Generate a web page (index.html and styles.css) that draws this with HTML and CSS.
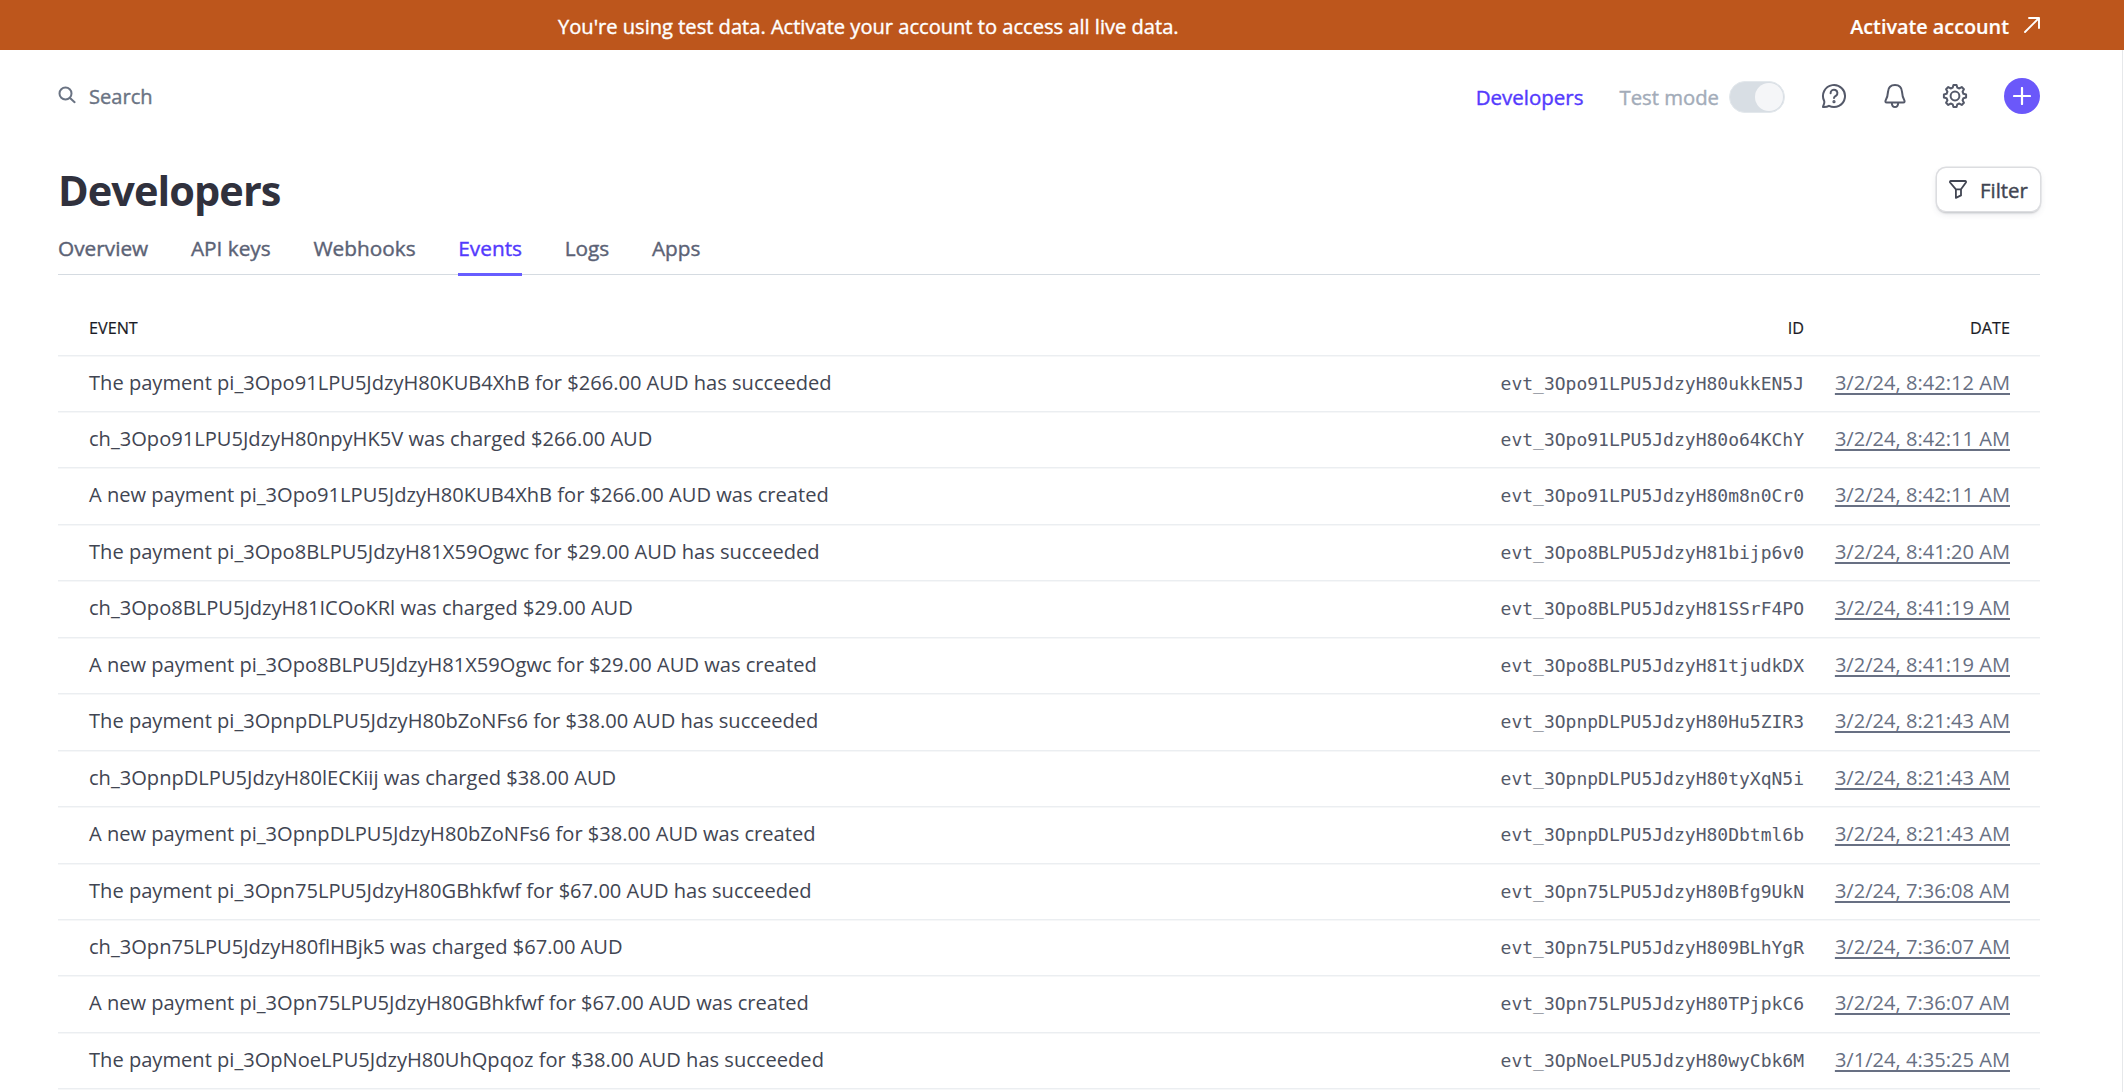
FILE: index.html
```
<!DOCTYPE html>
<html lang="en">
<head>
<meta charset="utf-8">
<title>Developers – Events</title>
<link rel="stylesheet" href="styles.css">
</head>
<body>
<div class="banner">
  <span class="banner-text">You're using test data. Activate your account to access all live data.</span>
  <a class="banner-link">Activate account
    <svg width="16" height="16" viewBox="0 0 16 16" fill="none" stroke="currentColor" stroke-width="1.9" stroke-linecap="round" stroke-linejoin="round"><path d="M1 15 15 1M5 1h10v10"/></svg>
  </a>
</div>
<div class="page">
  <header class="topbar">
    <div class="search">
      <svg width="18" height="18" viewBox="0 0 18 18" fill="none" stroke="currentColor" stroke-width="2" stroke-linecap="round"><circle cx="7.5" cy="7.5" r="6"/><path d="m12 12 4.6 4.2"/></svg>
      <span>Search</span>
    </div>
    <nav class="tools">
      <a class="nav-dev">Developers</a>
      <span class="test-label">Test mode</span>
      <span class="toggle"><span class="knob"></span></span>
      <svg class="icon help" width="26" height="26" viewBox="0 0 26 26" fill="none" stroke="currentColor" stroke-width="2" stroke-linecap="round" stroke-linejoin="round"><path d="M3.2 18A11 11 0 1 1 8 22.800C6 24 4 24.200 2 24 2.300 22 3.900 20.500 3.200 18Z"/><path d="M9.600 10.200a3.400 3.300 0 1 1 5.500 2.400c-1.300.9-2.100 1.300-2.100 2.400"/><circle cx="13" cy="18.700" r=".6" fill="currentColor"/></svg>
      <svg class="icon bell" width="24" height="26" viewBox="0 0 24 26" fill="none" stroke="currentColor" stroke-width="2" stroke-linecap="round" stroke-linejoin="round"><path d="M12 2C7.800 2 5.300 4.900 5 8.800c-.3 4.100-.7 5.700-2.200 8.300-.8 1.400-.4 2.500 1 2.500h16.400c1.400 0 1.800-1.100 1-2.500-1.500-2.600-1.900-4.200-2.200-8.300C18.700 4.900 16.200 2 12 2Z"/><path d="M8.900 20.200c0 2.300 1.300 3.800 3.100 3.800s3.100-1.500 3.100-3.800"/></svg>
      <svg class="icon gear" width="26" height="26" viewBox="-13 -13 26 26" fill="none" stroke="currentColor" stroke-width="2" stroke-linejoin="round"><circle r="4.400"/><path id="gear"/></svg>
      <span class="plus"><svg width="18" height="18" viewBox="0 0 18 18" fill="none" stroke="currentColor" stroke-width="2.200" stroke-linecap="round"><path d="M9 1v16M1 9h16"/></svg></span>
    </nav>
  </header>
  <div class="heading">
    <h1>Developers</h1>
    <button class="filter">
      <svg width="18" height="19" viewBox="0 0 18 19" fill="none" stroke="currentColor" stroke-width="1.800" stroke-linecap="round" stroke-linejoin="round"><path d="M1.800 1h14.400c.8 0 1.100.9.7 1.500L12 9.300v6.100L6.900 17.900V9.300L1.100 2.500C.7 1.900 1 1 1.800 1ZM6.900 9.400H12"/></svg>
      <span>Filter</span>
    </button>
  </div>
  <nav class="tabs">
    <a class="tab">Overview</a><a class="tab">API keys</a><a class="tab">Webhooks</a><a class="tab active">Events</a><a class="tab">Logs</a><a class="tab">Apps</a>
  </nav>
  <main class="table">
    <div class="row head"><span>EVENT</span><span>ID</span><span>DATE</span></div>
    <div class="row"><span class="event">The payment pi_3Opo91LPU5JdzyH80KUB4XhB for $266.00 AUD has succeeded</span><code class="id">evt_3Opo91LPU5JdzyH80ukkEN5J</code><a class="date">3/2/24, 8:42:12 AM</a></div>
    <div class="row"><span class="event">ch_3Opo91LPU5JdzyH80npyHK5V was charged $266.00 AUD</span><code class="id">evt_3Opo91LPU5JdzyH80o64KChY</code><a class="date">3/2/24, 8:42:11 AM</a></div>
    <div class="row"><span class="event">A new payment pi_3Opo91LPU5JdzyH80KUB4XhB for $266.00 AUD was created</span><code class="id">evt_3Opo91LPU5JdzyH80m8n0Cr0</code><a class="date">3/2/24, 8:42:11 AM</a></div>
    <div class="row"><span class="event">The payment pi_3Opo8BLPU5JdzyH81X59Ogwc for $29.00 AUD has succeeded</span><code class="id">evt_3Opo8BLPU5JdzyH81bijp6v0</code><a class="date">3/2/24, 8:41:20 AM</a></div>
    <div class="row"><span class="event">ch_3Opo8BLPU5JdzyH81ICOoKRl was charged $29.00 AUD</span><code class="id">evt_3Opo8BLPU5JdzyH81SSrF4PO</code><a class="date">3/2/24, 8:41:19 AM</a></div>
    <div class="row"><span class="event">A new payment pi_3Opo8BLPU5JdzyH81X59Ogwc for $29.00 AUD was created</span><code class="id">evt_3Opo8BLPU5JdzyH81tjudkDX</code><a class="date">3/2/24, 8:41:19 AM</a></div>
    <div class="row"><span class="event">The payment pi_3OpnpDLPU5JdzyH80bZoNFs6 for $38.00 AUD has succeeded</span><code class="id">evt_3OpnpDLPU5JdzyH80Hu5ZIR3</code><a class="date">3/2/24, 8:21:43 AM</a></div>
    <div class="row"><span class="event">ch_3OpnpDLPU5JdzyH80lECKiij was charged $38.00 AUD</span><code class="id">evt_3OpnpDLPU5JdzyH80tyXqN5i</code><a class="date">3/2/24, 8:21:43 AM</a></div>
    <div class="row"><span class="event">A new payment pi_3OpnpDLPU5JdzyH80bZoNFs6 for $38.00 AUD was created</span><code class="id">evt_3OpnpDLPU5JdzyH80Dbtml6b</code><a class="date">3/2/24, 8:21:43 AM</a></div>
    <div class="row"><span class="event">The payment pi_3Opn75LPU5JdzyH80GBhkfwf for $67.00 AUD has succeeded</span><code class="id">evt_3Opn75LPU5JdzyH80Bfg9UkN</code><a class="date">3/2/24, 7:36:08 AM</a></div>
    <div class="row"><span class="event">ch_3Opn75LPU5JdzyH80flHBjk5 was charged $67.00 AUD</span><code class="id">evt_3Opn75LPU5JdzyH809BLhYgR</code><a class="date">3/2/24, 7:36:07 AM</a></div>
    <div class="row"><span class="event">A new payment pi_3Opn75LPU5JdzyH80GBhkfwf for $67.00 AUD was created</span><code class="id">evt_3Opn75LPU5JdzyH80TPjpkC6</code><a class="date">3/2/24, 7:36:07 AM</a></div>
    <div class="row"><span class="event">The payment pi_3OpNoeLPU5JdzyH80UhQpqoz for $38.00 AUD has succeeded</span><code class="id">evt_3OpNoeLPU5JdzyH80wyCbk6M</code><a class="date">3/1/24, 4:35:25 AM</a></div>
  </main>
</div>
<script src="gear.js"></script>
</body>
</html>
```
FILE: styles.css
```
* { box-sizing: border-box; }

body {
  margin: 0;
  height: 1092px;
  overflow: hidden;
  display: flex;
  flex-direction: column;
  background: #fff;
  color: #414552;
  font: 400 20.1px "Open Sans", "Noto Sans", sans-serif;
}

svg { display: block; flex: none; }

/* A medium weight, between regular and semibold. */
.banner-text,
.search span,
.nav-dev,
.test-label,
.filter span,
.tab { -webkit-text-stroke: .4px currentColor; }

.banner {
  flex: none;
  height: 50px;
  display: flex;
  justify-content: space-between;
  align-items: center;
  padding: 2px 84px 0 558px;
  background: #bd561c;
  color: #fff;
}

.banner-link {
  display: flex;
  align-items: center;
  gap: 15px;
  font-size: 19.8px;
  font-weight: 600;
  -webkit-text-stroke: .2px currentColor;
}

.banner-link svg { margin-top: -3px; }

.page {
  flex: 1;
  width: 2123px;
  padding: 0 82px 0 58px;
  border-right: 1px solid #e6e8ea;
}

.topbar {
  height: 92px;
  display: flex;
  align-items: center;
  justify-content: space-between;
}

.search {
  display: flex;
  align-items: center;
  gap: 13px;
  color: #6a7383;
}

.search span { margin-top: 1px; }
.search svg { margin-top: -2px; }

.tools {
  display: flex;
  align-items: center;
  color: #545969;
}

.nav-dev {
  margin: 2px 36px 0 0;
  color: #533afd;
  font-size: 20.5px;
}

.test-label {
  margin: 2px 10px 0 0;
  color: #a3acb9;
  font-size: 20.3px;
}

.toggle {
  width: 56px;
  height: 32px;
  display: flex;
  justify-content: flex-end;
  margin: 2px 36px 0 0;
  padding: 1px;
  border: 1px solid #e3e8ec;
  border-radius: 16px;
  background: #d8dee4;
}

.knob {
  width: 28px;
  height: 28px;
  border-radius: 50%;
  background: #f5f6f8;
}

.help { margin-right: 36px; }
.bell { margin-right: 35px; }
.gear { margin-right: 36px; }

.plus {
  width: 36px;
  height: 36px;
  display: grid;
  place-items: center;
  border-radius: 50%;
  background: #6b58fa;
  color: #fff;
}

.heading {
  height: 95px;
  display: flex;
  align-items: center;
  justify-content: space-between;
}

h1 {
  margin: 0;
  color: #30313d;
  font-size: 41.5px;
  font-weight: 700;
  letter-spacing: -.95px;
}

.filter {
  width: 103px;
  height: 43px;
  display: flex;
  align-items: center;
  gap: 13px;
  padding: 0 12px;
  border: 0;
  border-radius: 9px;
  background: #fff;
  box-shadow: 0 0 0 1.5px #dcdde0, 0 2px 2px #b4b5b9, 0 3px 7px rgba(60, 66, 87, .12);
  color: #414552;
  font: 400 20.4px "Open Sans", sans-serif;
}

.tabs {
  height: 38px;
  display: flex;
  gap: 42.7px;
  border-bottom: 1px solid #d5dbe1;
}

.tab {
  height: 39px;
  border-bottom: 3px solid transparent;
  color: #5b6275;
  font-size: 20.8px;
  line-height: 22px;
}

.tab.active {
  border-color: #675dff;
  color: #533afd;
}

.table { margin-top: 27px; }

.row {
  height: 56.44px;
  display: grid;
  grid-template-columns: 1fr 330px 206px;
  align-items: baseline;
  padding: 0 30px 0 31px;
  border-bottom: 1px solid #ebeef1;
  box-shadow: 0 1px #f6f7f8;
  line-height: 54.6px;
}

.row > :nth-child(n + 2) { justify-self: end; }

.head {
  height: 53.6px;
  color: #1a1b25;
  font-size: 16.2px;
  line-height: 53px;
  -webkit-text-stroke: .2px currentColor;
}

.id {
  color: #545969;
  font: 18px "DejaVu Sans Mono", monospace;
}

.date {
  color: #687083;
  line-height: normal;
  text-decoration: underline;
  text-decoration-thickness: 2px;
  text-underline-offset: 3px;
}
```
FILE: gear.js
```
// Eight-tooth cog outline: alternating tooth tips and valleys joined by straight flanks.
const points = [];
for (let i = 0; i < 8; i++) {
  const a = i * 45;
  for (const [offset, radius] of [[-8, 11.2], [8, 11.2], [15, 8.7], [30, 8.7]]) {
    const t = (a + offset - 90) * Math.PI / 180;
    points.push((radius * Math.cos(t)).toFixed(2) + ' ' + (radius * Math.sin(t)).toFixed(2));
  }
}
document.getElementById('gear').setAttribute('d', 'M' + points.join('L') + 'Z');
```
